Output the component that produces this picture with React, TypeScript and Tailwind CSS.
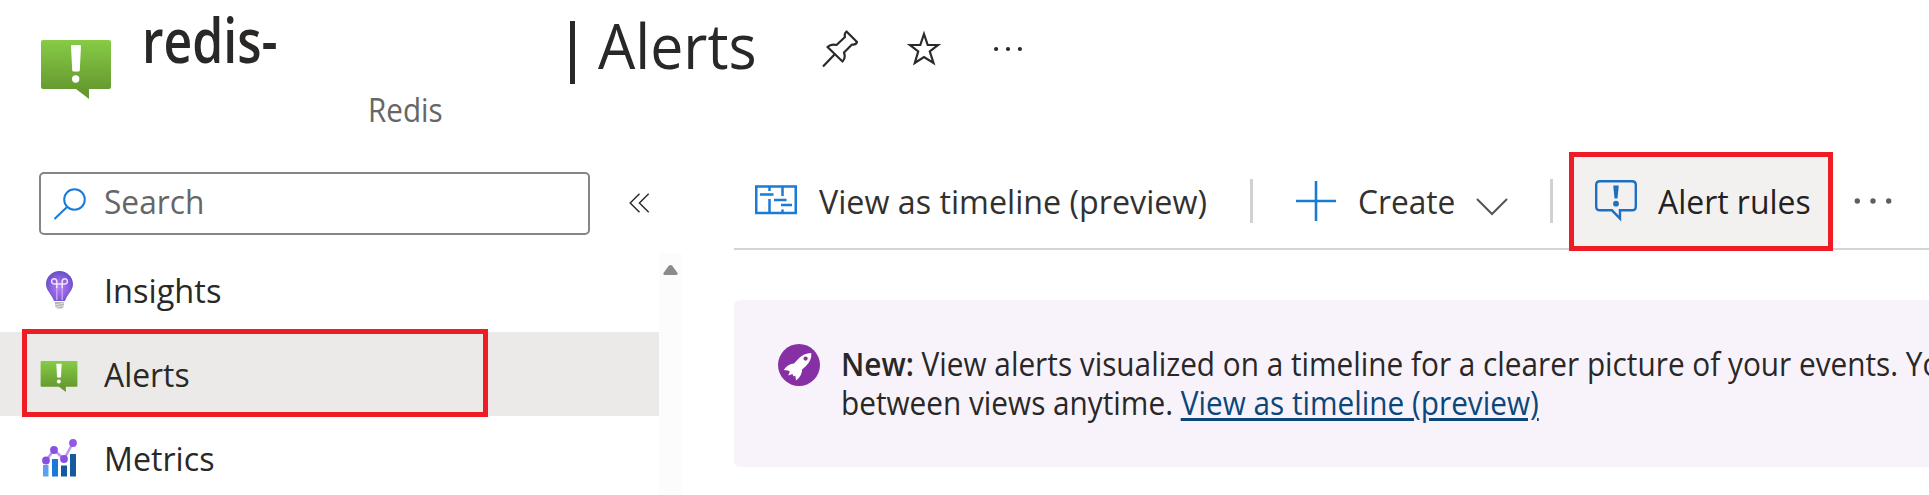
import type { ReactNode } from "react";

function AlertIcon({ className, id }: { className: string; id: string }) {
  return (
    <svg className={className} viewBox="0 0 70 59" fill="none">
      <defs>
        <linearGradient id={id} x1="0" y1="0" x2="0" y2="1">
          <stop offset="0" stopColor="#86cc45" />
          <stop offset="0.85" stopColor="#66992f" />
        </linearGradient>
      </defs>
      <path d="M2 0H68Q70 0 70 2V47Q70 49 68 49H48V59L35 49H2Q0 49 0 47V2Q0 0 2 0Z" fill={`url(#${id})`} />
      <path d="M31 5H39Q40 5 40 6L38.8 30Q38.7 31.5 37.5 31.5H32.5Q31.3 31.5 31.2 30L30 6Q30 5 31 5Z" fill="#fff" />
      <circle cx="34.7" cy="39" r="3.7" fill="#fff" />
    </svg>
  );
}

function PinIcon() {
  return (
    <svg className="h-[38px] w-[36px]" viewBox="0 0 36 38" fill="none" stroke="#2b2a29" strokeWidth="2.200" strokeLinejoin="round">
      <path d="M1 36.500L13 24M24.500 1.500L35 12Q34 15 30 14.500L22 22.500Q24 28 20.500 31.500L5.500 17Q9 13.500 14.500 15L23 7Q22 3.500 24.500 1.500Z" />
    </svg>
  );
}

function StarIcon() {
  return (
    <svg className="h-[38px] w-[36px]" viewBox="0 0 36 38" fill="none" stroke="#2b2a29" strokeWidth="2.200">
      <path d="M18 5L21.700 16H32L23.800 22.500L27.500 34L18 28L8.800 34L12.200 22.500L4 16H14.300Z" />
    </svg>
  );
}

function Dots({ className, r, gap }: { className: string; r: number; gap: number }) {
  return (
    <svg className={className} viewBox="0 0 42 10" fill="currentColor">
      <circle cx={21 - gap} cy="5" r={r} />
      <circle cx="21" cy="5" r={r} />
      <circle cx={21 + gap} cy="5" r={r} />
    </svg>
  );
}

function BulbIcon() {
  return (
    <svg className="h-[38px] w-[27px]" viewBox="0 0 27 38" fill="none">
      <defs>
        <radialGradient id="bulb" cx="0.5" cy="0.55" r="0.6">
          <stop offset="0" stopColor="#b77af4" />
          <stop offset="0.5" stopColor="#8f63e0" />
          <stop offset="1" stopColor="#5b4cc4" />
        </radialGradient>
      </defs>
      <path d="M13.500 0C21 0 27 6 27 13C27 20 21.500 22.500 19 30H8C5.500 22.500 0 20 0 13C0 6 6 0 13.500 0Z" fill="url(#bulb)" />
      <path d="M10.800 29V13M16.200 29V13" stroke="#cfa8f8" strokeWidth="1.300" />
      <path d="M10.800 17V13H8.300A2.600 2.600 0 1 1 10.800 10.500V13H16.200V10.500A2.600 2.600 0 1 1 18.700 13H16.200V17" stroke="#f0e4fd" strokeWidth="1.500" />
      <path d="M9 31H18V35L16 37.500H11L9 35Z" fill="#b5b5b5" />
      <path d="M9 34L18 32M9 36.500L18 34.500" stroke="#ededed" strokeWidth="0.800" />
    </svg>
  );
}

function MetricsIcon() {
  return (
    <svg className="h-[38px] w-[35px]" viewBox="0 0 35 38" fill="none">
      <path d="M1 26H6.500V37.500H1Z" fill="#5ea0ef" />
      <path d="M10 20H16V37.500H10Z" fill="#1b7ad4" />
      <path d="M19 26.500H25V37.500H19Z" fill="#155a9e" />
      <path d="M28 15H34V37.500H28Z" fill="#155a9e" />
      <path d="M4 21.500L12 11L22 20L31 4" stroke="#b796f9" strokeWidth="2.400" />
      <circle cx="4" cy="21.500" r="3.900" fill="#8a50e0" />
      <circle cx="12" cy="11" r="3.900" fill="#8a50e0" />
      <circle cx="22" cy="20" r="3.900" fill="#8a50e0" />
      <circle cx="31" cy="4" r="3.900" fill="#9358e6" />
    </svg>
  );
}

function TimelineIcon() {
  return (
    <svg className="h-[30px] w-[42px]" viewBox="0 0 42 30" fill="none" stroke="#1a7bd7">
      <path d="M1.250 1.500H40.750V28H1.250Z" strokeWidth="2.500" />
      <path d="M14.500 2V6M27.500 2V11M14.500 14V28M27.500 24.500V28" strokeWidth="2.500" />
      <path d="M5 9.500H18.500M19 15H31.500M26 20H37" strokeWidth="2.500" />
    </svg>
  );
}

function RuleIcon() {
  return (
    <svg className="h-[42px] w-[42px]" viewBox="0 0 42 42" fill="none">
      <path d="M5 1.200H37Q40.800 1.200 40.800 5V26.500Q40.800 30.300 37 30.300H25V38.500L17 30.300H5Q1.200 30.300 1.200 26.500V5Q1.200 1.200 5 1.200Z" stroke="#1d6fc0" strokeWidth="2.400" />
      <path d="M18.200 5.500H23.800L22.500 18.500H19.500Z" fill="#1d6fc0" />
      <circle cx="21" cy="23.700" r="2.900" fill="#1d6fc0" />
    </svg>
  );
}

function RocketIcon() {
  return (
    <svg className="h-[42px] w-[42px]" viewBox="0 0 42 42">
      <circle cx="21" cy="21" r="21" fill="#8730a5" />
      <path d="M33.300 9Q34 16.500 27.500 22.500L24 25.500Q24.500 31.500 18 36.500L17.300 31.500L15.500 32.500L14.500 30L10.200 31.500L11.800 27.500L10.200 26.500L5.700 26Q10 19.500 16 19.500L19.500 15.800Q25 9.200 33.300 9Z" fill="#fff" />
      <circle cx="27.600" cy="14.600" r="2.100" fill="#8730a5" />
    </svg>
  );
}

function NavItem({ icon, children, active = false }: { icon: ReactNode; children: ReactNode; active?: boolean }) {
  return (
    <li className={active ? "flex h-[84px] shrink-0 items-center bg-[#ebeae8]" : "flex h-[84px] shrink-0 items-center"}>
      <span className="ml-[39px] flex w-[40px] justify-center">{icon}</span>
      <span className="mt-[2px] ml-[25px] leading-[60px]">{children}</span>
    </li>
  );
}

export default function App() {
  return (
    <div className="flex h-[495px] w-[1929px] flex-col overflow-hidden bg-white font-['Open_Sans','Noto_Sans',sans-serif] text-[33px] text-[#292827]">
      <header className="flex h-[150px] shrink-0 items-start whitespace-nowrap">
        <AlertIcon id="header-alert" className="mt-[40px] ml-[41px] h-[59px] w-[70px]" />
        <div className="ml-[31px] w-[422px]">
          <h1 className="mt-[10px] origin-left scale-x-[0.805] text-[62px] leading-[58px] font-semibold">redis-</h1>
          <p className="mt-[22px] ml-[226px] origin-left scale-x-[0.925] text-[32px] leading-[40px] text-[#666]">Redis</p>
        </div>
        <span className="mt-[21px] ml-[6px] h-[63px] w-[5px] bg-[#292827]" />
        <h1 className="mt-[16px] ml-[23px] w-[224px] origin-left scale-x-[0.952] text-[62px] leading-[58px]">Alerts</h1>
        <div className="mt-[30px] flex items-start">
          <span><PinIcon /></span>
          <span className="ml-[48px] -mt-px"><StarIcon /></span>
          <Dots className="mt-[14px] ml-[45px] h-[10px] w-[42px]" r={2.1} gap={11.9} />
        </div>
      </header>

      <div className="flex min-h-0 flex-1">
        <aside className="flex w-[734px] shrink-0 flex-col">
          <div className="flex h-[98px] shrink-0 items-start">
            <div className="mt-[22px] ml-[39px] flex h-[63px] w-[551px] items-center rounded-[5px] border-2 border-[#878685]">
              <svg className="ml-[13px] h-[32px] w-[32px]" viewBox="0 0 32 32" fill="none" stroke="#1a7bd7" strokeWidth="2">
                <circle cx="20.500" cy="11.500" r="10.300" />
                <path d="M13 19L0.500 31" />
              </svg>
              <span className="-mt-[3px] ml-[18px] origin-left scale-x-[0.96] leading-[56px] text-[#666]">Search</span>
            </div>
            <svg className="mt-[43px] ml-[39px] h-[20px] w-[21px]" viewBox="0 0 21 20" fill="none" stroke="#292827" strokeWidth="1.400">
              <path d="M10.500 0.700L1.200 10L10.500 19.300M19.700 0.700L10.400 10L19.700 19.300" />
            </svg>
          </div>
          <div className="flex min-h-0 flex-1">
            <nav className="relative w-[659px]">
              <ul className="flex flex-col">
                <NavItem icon={<BulbIcon />}>
                  <span className="inline-block origin-left scale-x-[0.985]">Insights</span>
                </NavItem>
                <NavItem active icon={<AlertIcon id="nav-alert" className="mt-[4px] h-[31px] w-[38px]" />}>
                  <span className="inline-block origin-left scale-x-[0.965]">Alerts</span>
                </NavItem>
                <NavItem icon={<MetricsIcon />}>
                  <span className="inline-block origin-left scale-x-[0.975]">Metrics</span>
                </NavItem>
              </ul>
              <div className="absolute top-[81px] left-[22px] h-[88px] w-[466px] border-5 border-[#ee1c25]" />
            </nav>
            <div className="mt-[5px] w-[23px] bg-[#fcfcfc]">
              <svg className="mt-[12px] ml-[4px] h-[10px] w-[15px]" viewBox="0 0 15 10" fill="#8b8b8b">
                <path d="M0.300 8.300L5.500 1Q7.500 -0.800 9.500 1L14.700 8.300Q14.800 10 13.500 10H1.500Q0.200 10 0.300 8.300Z" />
              </svg>
            </div>
          </div>
        </aside>

        <main className="flex min-w-0 flex-1 flex-col whitespace-nowrap">
          <div className="flex h-[100px] shrink-0 items-start border-b-2 border-[#d4d4d4] text-[#323130]">
            <span className="mt-[35px] ml-[21px]"><TimelineIcon /></span>
            <span className="mt-[22px] ml-[22px] w-[431px] origin-left scale-x-[0.977] leading-[60px]">View as timeline (preview)</span>
            <span className="mt-[29px] h-[44px] w-[3px] bg-[#d2d1d0]" />
            <svg className="mt-[31px] ml-[43px] h-[40px] w-[40px]" viewBox="0 0 40 40" fill="none" stroke="#1a7bd7" strokeWidth="2.600">
              <path d="M20 0V40M0 20H40" />
            </svg>
            <span className="mt-[22px] ml-[22px] w-[118px] origin-left scale-x-[0.96] leading-[60px]">Create</span>
            <svg className="mt-[48px] h-[18px] w-[32px]" viewBox="0 0 32 18" fill="none" stroke="#555" strokeWidth="2">
              <path d="M1 1L16 16L31 1" />
            </svg>
            <span className="mt-[29px] ml-[42px] h-[44px] w-[3px] bg-[#d2d1d0]" />
            <div className="mt-[2px] ml-[16px] flex h-[99px] w-[264px] items-start border-5 border-[#ee1c25] bg-[#f3f1f0] text-[#222]">
              <span className="mt-[23px] ml-[21px]"><RuleIcon /></span>
              <span className="mt-[15px] ml-[21px] origin-left scale-x-[0.967] leading-[60px]">Alert rules</span>
            </div>
            <Dots className="mt-[46px] ml-[19px] h-[10px] w-[42px] text-[#605e5c]" r={2.700} gap={15.700} />
          </div>

          <section className="mt-[50px] flex h-[167px] shrink-0 items-start rounded-l-[6px] bg-[#f8f3fb]">
            <span className="mt-[44px] ml-[44px]"><RocketIcon /></span>
            <div className="mt-[44px] ml-[21px] w-[1250px] shrink-0 origin-left scale-x-[0.93] text-[32px] leading-[39px]">
              <p><strong className="font-semibold">New:</strong> View alerts visualized on a timeline for a clearer picture of your events. You</p>
              <p>between views anytime. <a className="text-[#0b477b] underline decoration-3 underline-offset-[3px]">View as timeline (preview)</a></p>
            </div>
          </section>
        </main>
      </div>
    </div>
  );
}
